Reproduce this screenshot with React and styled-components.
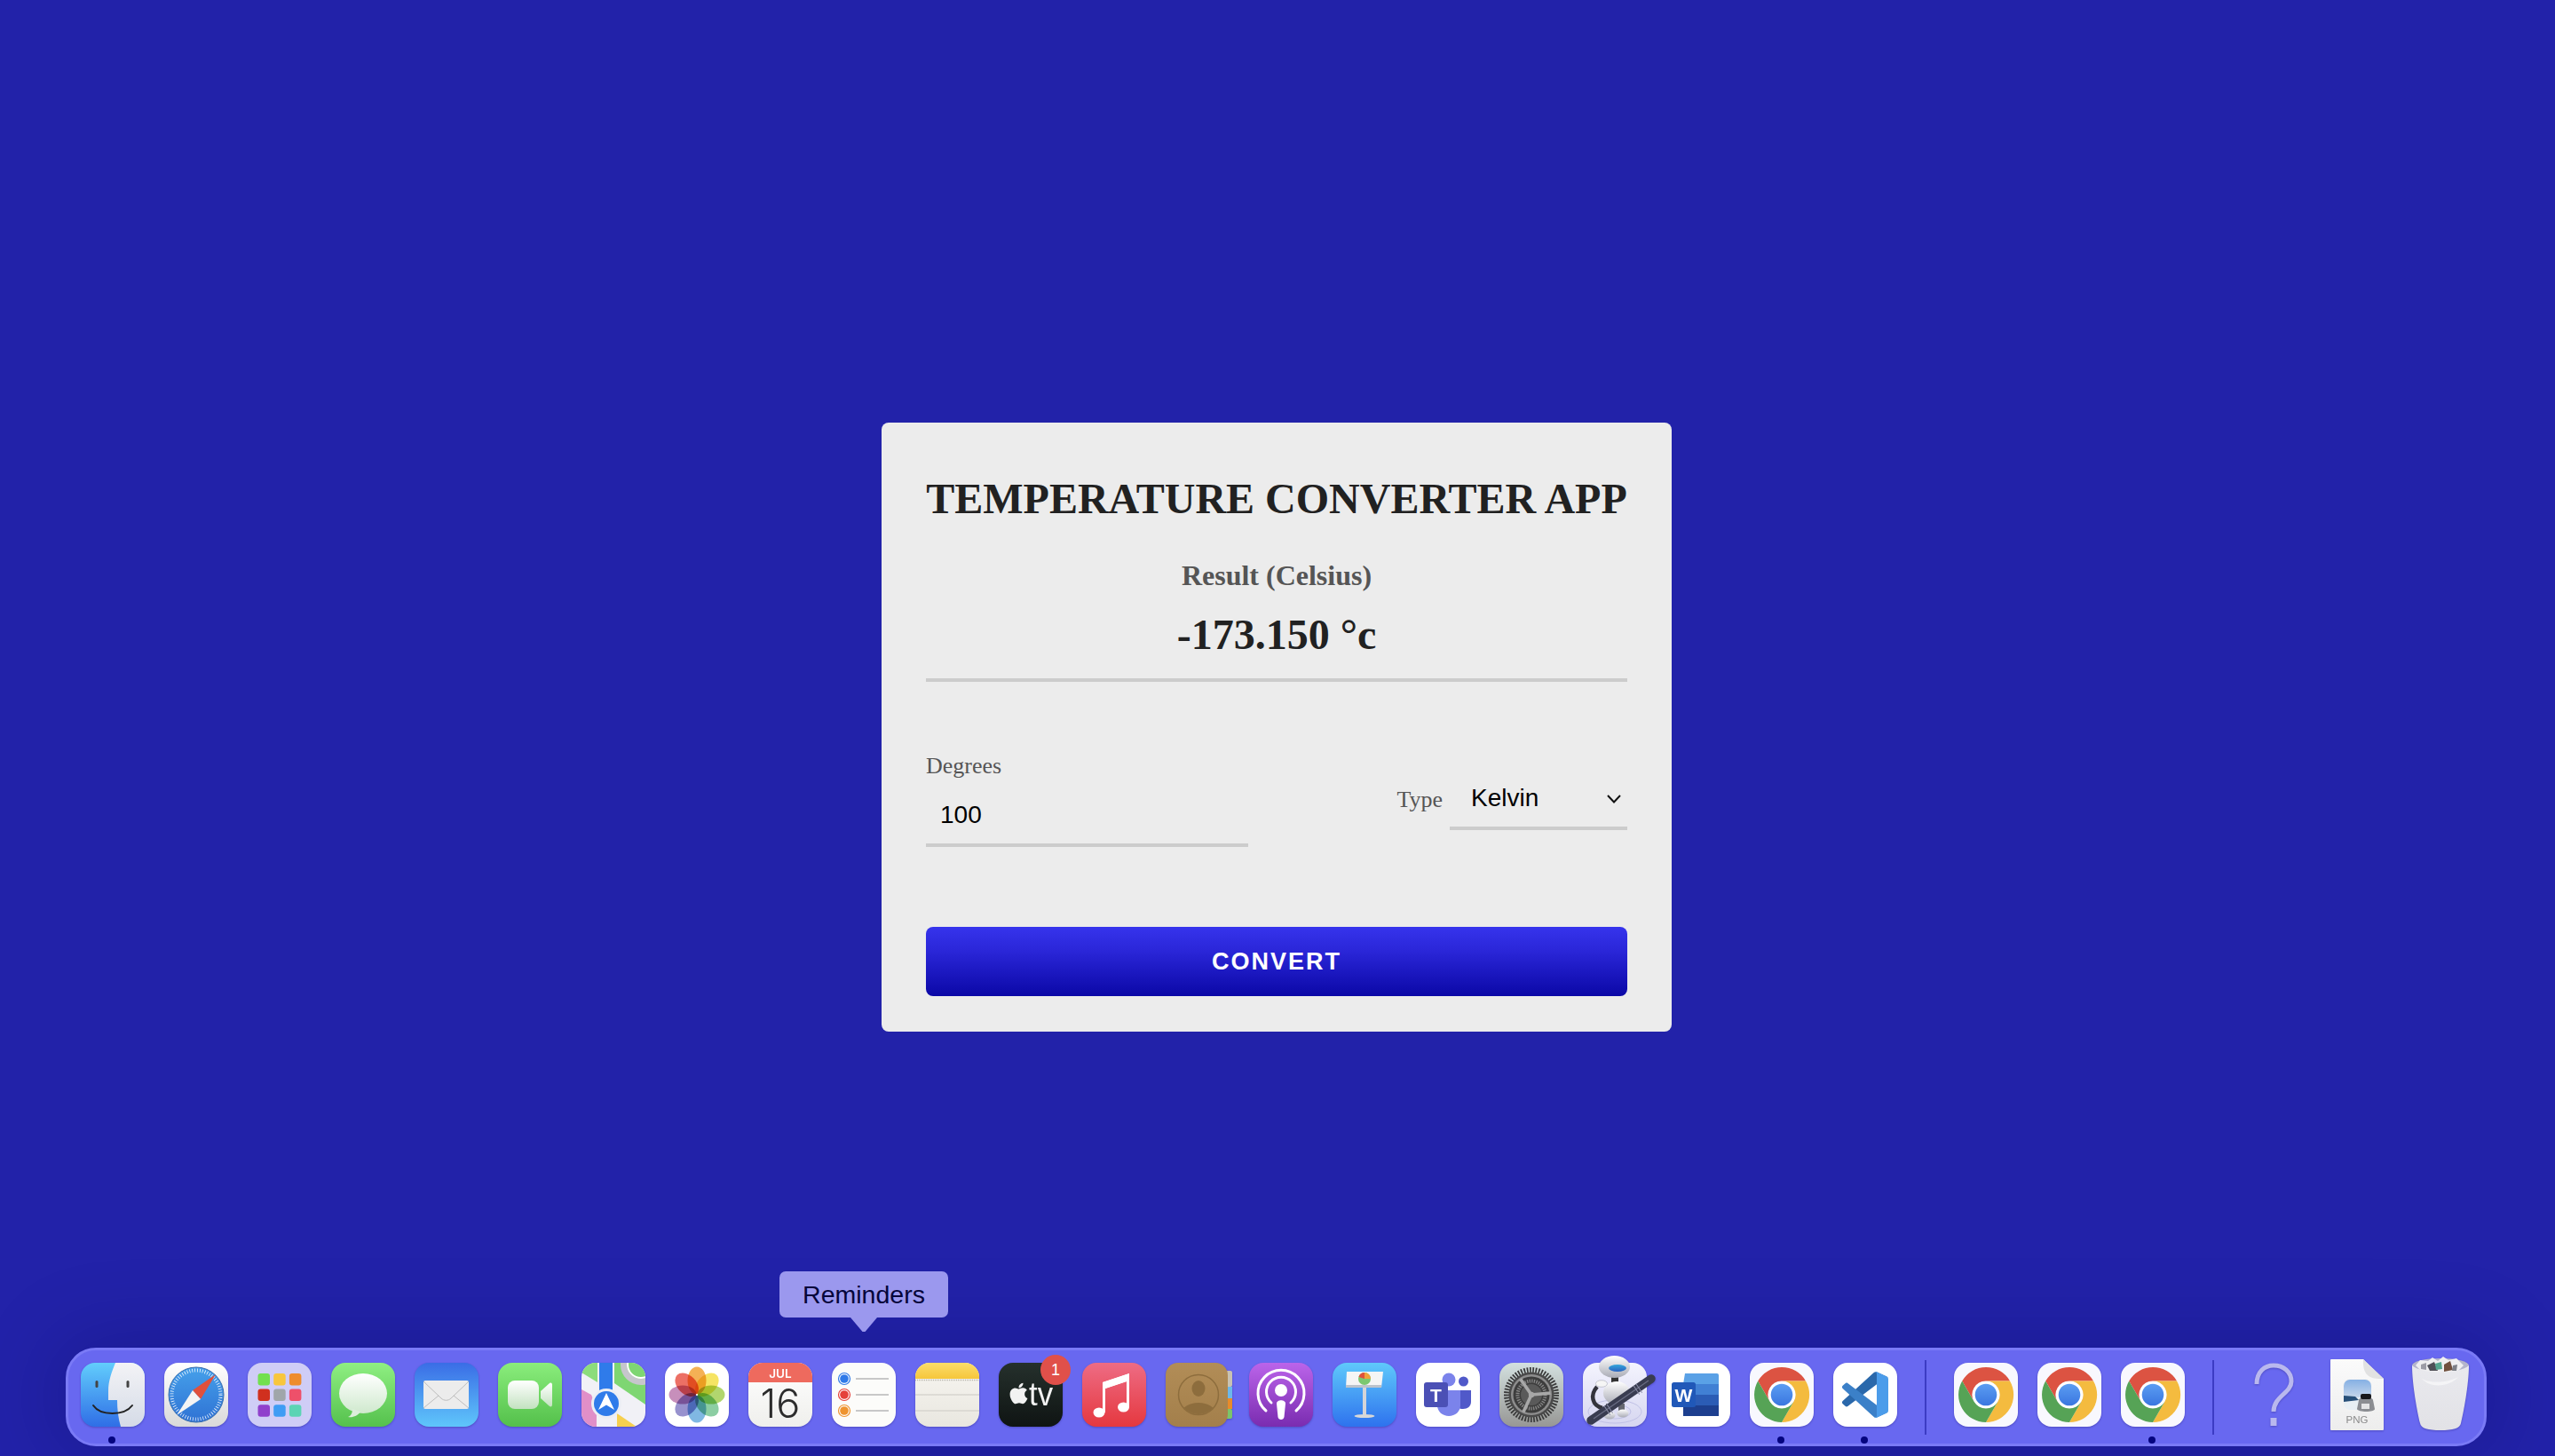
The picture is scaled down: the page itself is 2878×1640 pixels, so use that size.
import React from "react";
import styled, { createGlobalStyle } from "styled-components";
import { FaApple } from "react-icons/fa";

const Global = createGlobalStyle`
  html, body { margin: 0; padding: 0; background: #2222a9; }
  * { box-sizing: border-box; }
`;

const Screen = styled.div`
  position: relative;
  height: 1640px;
  overflow: hidden;
  background: #2222a9;
  display: flex;
  align-items: center;
  justify-content: center;
`;

const Card = styled.div`
  width: 890px;
  height: 686px;
  margin: 0 2px 2px 0;
  padding: 58px 50px 40px;
  background: #ececec;
  border-radius: 8px;
  font-family: "Liberation Serif", serif;
`;

const Title = styled.h1`
  margin: 0 0 41px;
  font-size: 48px;
  line-height: 55px;
  font-weight: 700;
  color: #212121;
  text-align: center;
  white-space: nowrap;
`;

const ResultLabel = styled.div`
  font-size: 32px;
  line-height: 37px;
  font-weight: 700;
  color: #555;
  text-align: center;
`;

const ResultValue = styled.div`
  margin-top: 20px;
  font-size: 48px;
  line-height: 55px;
  font-weight: 700;
  color: #212121;
  text-align: center;
`;

const Divider = styled.hr`
  margin: 22px 0 80px;
  height: 4px;
  border: 0;
  background: #ccc;
`;

const FormRow = styled.div`
  display: flex;
  align-items: center;
  justify-content: space-between;
  height: 106px;
`;

const Field = styled.label`
  display: flex;
  flex-direction: column;
  width: 363px;
`;

const LabelText = styled.span`
  font-size: 26px;
  line-height: 30px;
  color: #555;
`;

const DegreeInput = styled.input`
  margin-top: 4px;
  width: 100%;
  height: 72px;
  padding: 4px 16px 0;
  border: 0;
  border-bottom: 4px solid #ccc;
  background: transparent;
  font-family: "Liberation Sans", Arial, sans-serif;
  font-size: 28px;
  color: #000;
  outline: none;
`;

const TypeField = styled.label`
  display: flex;
  align-items: center;
  gap: 8px;
`;

const SelectWrap = styled.div`
  position: relative;
  width: 200px;
  height: 68px;
  border-bottom: 4px solid #ccc;
`;

const Select = styled.select`
  appearance: none;
  width: 100%;
  height: 100%;
  padding: 0 40px 2px 24px;
  border: 0;
  background: transparent;
  font-family: "Liberation Sans", Arial, sans-serif;
  font-size: 28px;
  color: #000;
  outline: none;
`;

const Chevron = styled.svg`
  position: absolute;
  right: 6px;
  top: 27px;
  width: 18px;
  height: 12px;
  pointer-events: none;
`;

const ConvertButton = styled.button`
  display: block;
  width: 100%;
  height: 78px;
  margin-top: 90px;
  border: 0;
  border-radius: 8px;
  background: linear-gradient(180deg, #3634ec 0%, #2a26d8 35%, #0b08a6 100%);
  color: #fff;
  font-family: "Liberation Sans", Arial, sans-serif;
  font-size: 27px;
  font-weight: 700;
  letter-spacing: 2px;
`;

const Dock = styled.div`
  position: absolute;
  left: 74px;
  bottom: 11px;
  width: 2727px;
  height: 111px;
  display: flex;
  align-items: flex-start;
  gap: 22px;
  padding: 14px 14px 0;
  background: #6868f0;
  border: 3px solid #7a7af6;
  border-radius: 34px;
  box-shadow: 0 0 90px 10px rgba(5, 0, 70, 0.22);
`;

const DockItem = styled.div`
  position: relative;
  flex: none;
  width: 72px;
  height: 72px;
`;

const Dot = styled.span`
  position: absolute;
  left: 31px;
  top: 83px;
  width: 8px;
  height: 8px;
  border-radius: 50%;
  background: #05057f;
`;

const Separator = styled.div`
  flex: none;
  width: 2px;
  height: 84px;
  margin: -3px 8.6px 0 ${(p) => p.$lead}px;
  background: #3c3cc4;
`;

const Badge = styled.span`
  position: absolute;
  left: 47px;
  top: -9px;
  width: 34px;
  height: 34px;
  border-radius: 50%;
  background: #e0504a;
  color: #fff;
  font-family: "Liberation Sans", Arial, sans-serif;
  font-size: 18px;
  line-height: 34px;
  text-align: center;
`;

const Tooltip = styled.div`
  position: absolute;
  left: 50%;
  bottom: calc(100% + 51px);
  transform: translateX(-50%);
  width: 190px;
  height: 52px;
  border-radius: 7px;
  background: #9b98ee;
  color: #05053a;
  font-family: "Liberation Sans", Arial, sans-serif;
  font-size: 28.5px;
  line-height: 52px;
  text-align: center;
  &::after {
    content: "";
    position: absolute;
    left: 80px;
    top: 100%;
    width: 30px;
    height: 16px;
    background: #9b98ee;
    clip-path: polygon(0 0, 100% 0, 55% 100%, 45% 100%);
  }
`;

const IconSvg = styled.svg`
  display: block;
  width: 72px;
  height: 72px;
  overflow: visible;
  filter: drop-shadow(0 1px 1px rgba(20, 10, 90, 0.3));
`;

const Icon = ({ children }) => <IconSvg viewBox="0 0 72 72">{children}</IconSvg>;

const Grad = ({ id, from, to, x2 = 0, y2 = 1 }) => (
  <linearGradient id={id} x1="0" y1="0" x2={x2} y2={y2}>
    <stop offset="0" stopColor={from} />
    <stop offset="1" stopColor={to} />
  </linearGradient>
);

const Tile = ({ fill }) => <rect width="72" height="72" rx="16" fill={fill} />;
const TileClip = ({ id }) => (
  <clipPath id={id}>
    <rect width="72" height="72" rx="16" />
  </clipPath>
);

const Finder = () => (
  <Icon>
    <defs>
      <Grad id="fa" from="#62cdfc" to="#2f6ee6" />
      <Grad id="fb" from="#f3f3f6" to="#d5dbe7" />
    </defs>
    <Tile fill="url(#fa)" />
    <path d="M39 0H56A16 16 0 0 1 72 16V56A16 16 0 0 1 56 72H45C42 62 41 52 41 42H31V32C31 20 35 10 39 0Z" fill="url(#fb)" />
    <rect x="16.5" y="20" width="3" height="8" rx="1.5" fill="#444" />
    <rect x="51.5" y="20" width="3" height="8" rx="1.5" fill="#444" />
    <path d="M14 48C22 60 49 60 58 48" fill="none" stroke="#222" strokeWidth="2" strokeLinecap="round" />
  </Icon>
);

const Safari = () => (
  <Icon>
    <defs>
      <Grad id="sa" from="#ffffff" to="#d9d9d9" />
      <Grad id="sb" from="#45a0ea" to="#2f72d4" />
    </defs>
    <Tile fill="url(#sa)" />
    <circle cx="36" cy="36" r="31" fill="url(#sb)" stroke="#3a6fae" strokeWidth="1" />
    <circle cx="36" cy="36" r="27.5" fill="none" stroke="#fff" strokeWidth="4" strokeDasharray="0.8 2.1" opacity="0.9" />
    <path d="M58 13L32 31L41 41Z" fill="#e0503c" />
    <path d="M14 59L32 31L41 41Z" fill="#f4f4f4" />
  </Icon>
);

const padColors = ["#72e04f", "#f8c63c", "#ee8c2c", "#d0301f", "#a0a6aa", "#ee506a", "#9040cc", "#3f9cf4", "#5cd4b4"];
const Launchpad = () => (
  <Icon>
    <Tile fill="#cfcdf6" />
    {padColors.map((c, i) => (
      <rect key={c} x={11.5 + (i % 3) * 17.7} y={12 + Math.floor(i / 3) * 17.6} width="13.5" height="13.5" rx="3" fill={c} />
    ))}
  </Icon>
);

const Messages = () => (
  <Icon>
    <defs>
      <Grad id="ma" from="#8fef82" to="#55c14d" />
      <Grad id="mb" from="#ffffff" to="#cfe9cd" />
    </defs>
    <Tile fill="url(#ma)" />
    <ellipse cx="36" cy="34.5" rx="27" ry="22.5" fill="url(#mb)" />
    <path d="M24 52C24 57 22 60 19 61C24 62 30 60 33 55Z" fill="#dceedb" />
  </Icon>
);

const Mail = () => (
  <Icon>
    <defs>
      <Grad id="la" from="#3a6de6" to="#5fc6fb" />
    </defs>
    <Tile fill="url(#la)" />
    <rect x="10" y="20" width="51" height="32" rx="2" fill="#ececec" />
    <path d="M10 21L30 40C33 43 38 43 41 40L61 21M10 51L27 37M61 51L44 37" fill="none" stroke="#bdbdbd" strokeWidth="1" />
  </Icon>
);

const FaceTime = () => (
  <Icon>
    <defs>
      <Grad id="ta" from="#8aed7c" to="#54c04b" />
      <Grad id="tb" from="#ffffff" to="#c3e2c0" />
    </defs>
    <Tile fill="url(#ta)" />
    <rect x="11" y="20" width="35" height="32" rx="8" fill="url(#tb)" />
    <path d="M48 32L58 23C60 22 61 23 61 25V47C61 49 60 50 58 49L48 40Z" fill="url(#tb)" />
  </Icon>
);

const Maps = () => (
  <Icon>
    <defs>
      <TileClip id="mapclip" />
    </defs>
    <g clipPath="url(#mapclip)">
      <rect width="72" height="72" fill="#f1f1f6" />
      <path d="M0 0H18V22L0 11Z" fill="#8cdc7c" />
      <path d="M37 0H72V47L37 23Z" fill="#7ed672" />
      <path d="M0 30L11 36L17 50V72H0Z" fill="#e08fc8" />
      <path d="M40 57L62 72H40Z" fill="#f6cf4e" />
      <rect x="20" y="0" width="15" height="32" fill="#2f7bea" />
      <circle cx="67" cy="2" r="19.5" fill="none" stroke="#c6c6cc" strokeWidth="7" />
      <circle cx="67" cy="2" r="15" fill="none" stroke="#fff" strokeWidth="2" />
      <circle cx="28" cy="46" r="17" fill="#eceef4" />
      <circle cx="28" cy="46" r="14" fill="#2f7bea" />
      <path d="M28 34L37 53L28 47.5L19 53Z" fill="#fff" />
    </g>
  </Icon>
);

const petals = ["#f3a63d", "#f5e14e", "#a6d15a", "#7cc796", "#6eaee0", "#8a83c8", "#c07fb2", "#ea5c50"];
const Photos = () => (
  <Icon>
    <Tile fill="#fff" />
    {petals.map((c, i) => (
      <ellipse key={c} cx="36" cy="20" rx="10.5" ry="15.5" fill={c} opacity="0.88" transform={`rotate(${i * 45} 36 36)`} style={{ mixBlendMode: "multiply" }} />
    ))}
    <circle cx="36" cy="36" r="1" fill="#fff" />
  </Icon>
);

const Calendar = () => (
  <Icon>
    <defs>
      <TileClip id="calclip" />
      <Grad id="ca" from="#ffffff" to="#efefec" />
    </defs>
    <Tile fill="url(#ca)" />
    <rect width="72" height="22" fill="#ee6a5e" clipPath="url(#calclip)" />
    <text x="36" y="17" textAnchor="middle" fontFamily="Inter, sans-serif" fontWeight="600" fontSize="13.5" fill="#fff">JUL</text>
    <text x="36" y="62" textAnchor="middle" fontFamily="Inter, sans-serif" fontWeight="300" fontSize="45" fill="#2c2c2c">16</text>
  </Icon>
);

const remColors = ["#2f7ae8", "#e5413a", "#ee9430"];
const Reminders = () => (
  <Icon>
    <Tile fill="#fcfcfa" />
    {remColors.map((c, i) => (
      <g key={c}>
        <circle cx="14" cy={18 + i * 18} r="6.5" fill="#fff" stroke={c} strokeWidth="1.2" />
        <circle cx="14" cy={18 + i * 18} r="4.8" fill={c} />
        <rect x="27" y={17 + i * 18} width="37" height="2" fill="#c8c8c8" />
      </g>
    ))}
  </Icon>
);

const Notes = () => (
  <Icon>
    <defs>
      <TileClip id="noteclip" />
      <Grad id="na" from="#f7f5f0" to="#e9e7e0" />
      <Grad id="nb" from="#fbdd6a" to="#f6c63b" />
    </defs>
    <Tile fill="url(#na)" />
    <rect width="72" height="18" fill="url(#nb)" clipPath="url(#noteclip)" />
    <line x1="0" x2="72" y1="19.5" y2="19.5" stroke="#b5b3ac" strokeWidth="1.5" strokeDasharray="1 1" />
    <line x1="0" x2="72" y1="36" y2="36" stroke="#d7d5cf" strokeWidth="1.5" />
    <line x1="0" x2="72" y1="54" y2="54" stroke="#d7d5cf" strokeWidth="1.5" />
  </Icon>
);

const TV = () => (
  <Icon>
    <defs>
      <Grad id="va" from="#25302c" to="#0f1413" />
    </defs>
    <Tile fill="url(#va)" />
    <FaApple x="9" y="21" size={27} color="#f2f2f2" />
    <text x="34" y="48" fontFamily="'Liberation Sans', sans-serif" fontSize="37" textLength="27" lengthAdjust="spacingAndGlyphs" fill="#f2f2f2">tv</text>
  </Icon>
);

const Music = () => (
  <Icon>
    <defs>
      <Grad id="ua" from="#ee6c84" to="#e5383f" />
    </defs>
    <Tile fill="url(#ua)" />
    <path d="M23 22L53 12V50H50V21L26 29V56H23Z" fill="#fff" />
    <path d="M23 22L53 12V20L23 30Z" fill="#fff" />
    <ellipse cx="19" cy="56" rx="6.5" ry="5.5" fill="#fff" />
    <ellipse cx="46.5" cy="50" rx="6.5" ry="5.5" fill="#fff" />
  </Icon>
);

const Contacts = () => (
  <Icon>
    <defs>
      <Grad id="oa" from="#b28d57" to="#a37f4b" />
      <clipPath id="oclip">
        <circle cx="37" cy="36" r="22" />
      </clipPath>
    </defs>
    <rect x="62" y="9" width="13" height="18" rx="2" fill="#c9c2b2" />
    <rect x="62" y="27" width="13" height="13" fill="#6cb8ea" />
    <rect x="62" y="40" width="13" height="12" fill="#e88b2a" />
    <rect x="62" y="52" width="13" height="11" rx="2" fill="#7cc46a" />
    <rect width="70" height="72" rx="14" fill="url(#oa)" />
    <circle cx="37" cy="36" r="22.5" fill="none" stroke="#8d6d3d" strokeWidth="1.5" />
    <ellipse cx="37" cy="29" rx="7.5" ry="9" fill="#8d6d3d" />
    <ellipse cx="37" cy="57" rx="19" ry="12" fill="#8d6d3d" clipPath="url(#oclip)" />
  </Icon>
);

const Podcasts = () => (
  <Icon>
    <defs>
      <Grad id="pa" from="#bb64ea" to="#7a2cb0" />
    </defs>
    <Tile fill="url(#pa)" />
    <path d="M19 54A26 26 0 1 1 53 54" fill="none" stroke="#fff" strokeWidth="3" strokeLinecap="round" />
    <path d="M25 45A16.5 16.5 0 1 1 47 45" fill="none" stroke="#fff" strokeWidth="3" strokeLinecap="round" />
    <circle cx="36" cy="31" r="7" fill="#fff" />
    <path d="M31 46C31 41 41 41 41 46L39.5 61C39 65 33 65 32.5 61Z" fill="#fff" />
  </Icon>
);

const Keynote = () => (
  <Icon>
    <defs>
      <Grad id="ka" from="#5fc9fb" to="#2e72ee" />
    </defs>
    <Tile fill="url(#ka)" />
    <rect x="34" y="28" width="4" height="31" fill="#d5d5d8" />
    <ellipse cx="36" cy="60" rx="11.5" ry="2" fill="#d8d8d8" />
    <path d="M16 10H57L55 28H15Z" fill="#f5f5f5" />
    <rect x="15" y="25" width="40" height="3" fill="#bcc3cc" />
    <circle cx="36" cy="18" r="7" fill="#7bc870" />
    <path d="M36 18V11A7 7 0 0 1 43 18Z" fill="#f0a23c" />
    <path d="M36 18V11A7 7 0 0 0 29.5 16Z" fill="#e0503c" />
  </Icon>
);

const Teams = () => (
  <Icon>
    <Tile fill="#fff" />
    <circle cx="37" cy="19" r="7.5" fill="#7b83eb" />
    <circle cx="53.5" cy="21" r="5.5" fill="#5059c9" />
    <path d="M44 31H62V44C62 49 58 52 53 52C49 52 45 50 44 46Z" fill="#5059c9" />
    <path d="M24 31H50V48C50 55 44 60 37 60C30 60 24 55 24 48Z" fill="#7b83eb" />
    <rect x="9" y="22" width="27" height="28" rx="3" fill="#4b50b5" />
    <text x="22.5" y="44" textAnchor="middle" fontFamily="'Liberation Sans', sans-serif" fontWeight="700" fontSize="21" fill="#fff">T</text>
  </Icon>
);

const spokes = [-125, -5, 115];
const SystemPrefs = () => (
  <Icon>
    <defs>
      <Grad id="ya" from="#d3e0df" to="#979795" />
    </defs>
    <Tile fill="url(#ya)" />
    <circle cx="36" cy="36" r="27" fill="none" stroke="#3a3a3a" strokeWidth="8" strokeDasharray="1.7 1.5" />
    <circle cx="36" cy="36" r="25.5" fill="#4a4a4a" />
    <circle cx="36" cy="36" r="23" fill="#8d8d8d" />
    <circle cx="36" cy="36" r="20.5" fill="#3d3d3d" />
    <circle cx="36" cy="36" r="15.5" fill="none" stroke="#888" strokeWidth="4" strokeDasharray="1.3 1.3" />
    <circle cx="36" cy="36" r="12" fill="#5a5a5a" />
    {spokes.map((a) => (
      <rect key={a} x="36" y="34.2" width="21.5" height="3.6" fill="#a8a8a8" transform={`rotate(${a} 36 36)`} />
    ))}
    <circle cx="36" cy="36" r="3.2" fill="#a8a8a8" />
  </Icon>
);

const Automator = () => (
  <Icon>
    <defs>
      <Grad id="aa" from="#f4f4fe" to="#d6d6f0" />
      <Grad id="ab" from="#ffffff" to="#a9abb5" />
      <Grad id="ac" from="#35a7dc" to="#2a62c0" />
    </defs>
    <Tile fill="url(#aa)" />
    <ellipse cx="36" cy="55" rx="30" ry="13" fill="none" stroke="#c0c1e6" strokeWidth="1" />
    <ellipse cx="36" cy="55" rx="18" ry="8" fill="none" stroke="#c0c1e6" strokeWidth="1" />
    <path d="M16 27C8 36 10 48 22 51" fill="none" stroke="#34343c" strokeWidth="4.5" />
    <rect x="32" y="15" width="8" height="8" fill="#333" />
    <ellipse cx="38" cy="34" rx="15" ry="13" fill="url(#ab)" />
    <ellipse cx="21" cy="23.5" rx="6.5" ry="3.8" fill="#f5f5f5" stroke="#9a9ca8" strokeWidth="0.5" />
    <rect x="26" y="46" width="7" height="12" fill="#65676f" />
    <rect x="40" y="46" width="7" height="11" fill="#65676f" />
    <ellipse cx="30" cy="59" rx="6.5" ry="4.5" fill="url(#ab)" />
    <ellipse cx="45" cy="57" rx="6.5" ry="4.5" fill="url(#ab)" />
    <ellipse cx="35.5" cy="4.5" rx="17.5" ry="12.5" fill="url(#ab)" />
    <ellipse cx="39" cy="6" rx="10" ry="4" fill="url(#ac)" />
    <path d="M9 65L77 18" stroke="#393c50" strokeWidth="9.5" strokeLinecap="round" />
    <path d="M12 63L74 20" stroke="#6b6e85" strokeWidth="1.2" />
    <path d="M27 54L31 51.3M60 31L64 28.3" stroke="#8c8ea8" strokeWidth="12" strokeDasharray="1 2.5" />
  </Icon>
);

const wordBands = ["#5aa1e6", "#4180d4", "#2b5cb5", "#1d3f8f"];
const Word = () => (
  <Icon>
    <Tile fill="#fff" />
    {wordBands.map((c, i) => (
      <path key={c} d={`M${i === 0 ? "21 12H57Q59 12 59 14" : `19 ${12 + i * 12}H59`}V${24 + i * 12}H19Z`} fill={c} />
    ))}
    <rect x="6" y="22" width="27" height="28" rx="2.5" fill="#2058b8" />
    <text x="19.5" y="44" textAnchor="middle" fontFamily="'Liberation Sans', sans-serif" fontWeight="700" fontSize="21" fill="#fff">W</text>
  </Icon>
);

const Chrome = ({ id }) => (
  <Icon>
    <defs>
      <Grad id={id} from="#5b9df2" to="#3a76e0" />
    </defs>
    <Tile fill="#f8f8fe" />
    <path d="M36 5A31 31 0 0 1 63 20.5L36 20.5A15.5 15.5 0 0 0 22.6 43.8L9.2 20.5A31 31 0 0 1 36 5Z" fill="#dc5342" />
    <path d="M63 20.5A31 31 0 0 1 36 67L49.4 43.8A15.5 15.5 0 0 0 36 20.5Z" fill="#f4bb3f" />
    <path d="M9.2 20.5L22.6 43.8A15.5 15.5 0 0 0 49.4 43.8L36 67A31 31 0 0 1 9.2 20.5Z" fill="#56a356" />
    <circle cx="36" cy="36" r="15" fill="#fff" />
    <circle cx="36" cy="36" r="12.3" fill={`url(#${id})`} />
  </Icon>
);

const VSCode = () => (
  <Icon>
    <Tile fill="#fff" />
    <g transform="translate(10 10) scale(0.52)">
      <path fill="#2a68ab" d="M96.4614 10.7962L75.8569 0.875542C73.4719 -0.272773 70.6217 0.211611 68.75 2.08333L1.29858 63.5832C-0.515693 65.2373 -0.513607 68.0937 1.30308 69.7452L6.81272 74.754C8.29793 76.1042 10.5347 76.2036 12.1338 74.9905L93.3609 13.3699C96.086 11.3026 100 13.2462 100 16.6667V16.4275C100 14.0265 98.6246 11.8378 96.4614 10.7962Z" />
      <path fill="#3b80c8" d="M96.4614 89.2038L75.8569 99.1245C73.4719 100.273 70.6217 99.7884 68.75 97.9167L1.29858 36.4168C-0.515693 34.7627 -0.513607 31.9063 1.30308 30.2548L6.81272 25.246C8.29793 23.8958 10.5347 23.7964 12.1338 25.0095L93.3609 86.6301C96.086 88.6974 100 86.7538 100 83.3333V83.5725C100 85.9735 98.6246 88.1622 96.4614 89.2038Z" />
      <path fill="#4b9cea" d="M75.8578 99.1263C73.4721 100.274 70.6219 99.7885 68.75 97.9166C71.0564 100.223 75 98.5895 75 95.3278V4.67213C75 1.41039 71.0564 -0.223106 68.75 2.08329C70.6219 0.211402 73.4721 -0.273666 75.8578 0.873633L96.4587 10.7807C98.6234 11.8217 100 14.0112 100 16.4132V83.5871C100 85.9891 98.6234 88.1786 96.4586 89.2196L75.8578 99.1263Z" />
    </g>
  </Icon>
);

const Question = () => (
  <Icon>
    <path d="M17 24C17 10 26 3 36 3C47 3 56 10 56 21C56 34 36 38 36 55" fill="none" stroke="#b9b8ee" strokeWidth="5" />
    <rect x="32.5" y="62" width="7" height="9" fill="#b9b8ee" />
  </Icon>
);

const PngFile = () => (
  <Icon>
    <defs>
      <clipPath id="pclip">
        <rect x="21" y="19" width="31" height="34" rx="7" />
      </clipPath>
      <Grad id="pb" from="#85b0e4" to="#c6d6ea" />
      <Grad id="pc" from="#fbfbfb" to="#ededed" />
    </defs>
    <path d="M7 -4H43L66 18V75A1 1 0 0 1 65 76H7A1 1 0 0 1 6 75V-3A1 1 0 0 1 7 -4Z" fill="url(#pc)" />
    <path d="M43 -4L66 18C50 19 42 14 43 -4Z" fill="#e2e2e2" />
    <rect x="20" y="18" width="33" height="36" rx="8" fill="#f3f3f3" />
    <g clipPath="url(#pclip)">
      <rect x="21" y="19" width="31" height="20" fill="url(#pb)" />
      <rect x="21" y="39" width="31" height="14" fill="#e8eff4" />
      <path d="M21 37L34 38L38 42L21 44Z" fill="#274f78" />
    </g>
    <path d="M38 42C38 38 54 38 54 42L56 52C56 56 37 56 36 52Z" fill="#8b8d92" />
    <rect x="40" y="35" width="12" height="6" rx="2" fill="#17171a" />
    <rect x="41" y="46" width="9" height="6" fill="#e4e4e6" />
    <text x="36" y="68" textAnchor="middle" fontFamily="'Liberation Sans', sans-serif" fontSize="11.5" fill="#8c8c8c">PNG</text>
  </Icon>
);

const Trash = () => (
  <Icon>
    <defs>
      <Grad id="ra" from="#e9e9ee" to="#e2e2e6" />
    </defs>
    <ellipse cx="36" cy="3" rx="32" ry="8" fill="#b5b5cb" />
    <path d="M8 3L13 -3L22 -2L27 -6L33 -2L39 -7L45 -3L54 -5L62 3L54 11H16Z" fill="#efeff1" />
    <path d="M21 3L29 -1L33 9L24 9Z" fill="#505058" />
    <path d="M30 1L37 -1L38 7L31 8Z" fill="#55a690" />
    <path d="M40 2L47 -2L50 8L40 10Z" fill="#70503e" />
    <path d="M50 3L55 2L54 9L49 9Z" fill="#7d8088" />
    <path d="M14 2L20 0L20 8L14 7Z" fill="#9d9da6" />
    <path d="M4 3C14 13 58 13 68 3C68 24 62 56 59 68C58 74 50 76 36 76C22 76 14 74 13 68C10 56 4 24 4 3Z" fill="url(#ra)" />
    <path d="M15 18C26 24 46 22 56 16C48 26 26 30 15 18Z" fill="#f4f4f6" />
  </Icon>
);

const firstGroup = [
  { key: "finder", Art: Finder, dot: true },
  { key: "safari", Art: Safari },
  { key: "launchpad", Art: Launchpad },
  { key: "messages", Art: Messages },
  { key: "mail", Art: Mail },
  { key: "facetime", Art: FaceTime },
  { key: "maps", Art: Maps },
  { key: "photos", Art: Photos },
  { key: "calendar", Art: Calendar },
  { key: "reminders", Art: Reminders, tip: "Reminders" },
  { key: "notes", Art: Notes },
  { key: "tv", Art: TV, badge: "1" },
  { key: "music", Art: Music },
  { key: "contacts", Art: Contacts },
  { key: "podcasts", Art: Podcasts },
  { key: "keynote", Art: Keynote },
  { key: "teams", Art: Teams },
  { key: "prefs", Art: SystemPrefs },
  { key: "automator", Art: Automator },
  { key: "word", Art: Word },
  { key: "chrome0", Art: () => <Chrome id="c0" />, dot: true },
  { key: "vscode", Art: VSCode, dot: true },
];
const secondGroup = [
  { key: "chrome1", Art: () => <Chrome id="c1" /> },
  { key: "chrome2", Art: () => <Chrome id="c2" /> },
  { key: "chrome3", Art: () => <Chrome id="c3" />, dot: true },
];
const thirdGroup = [
  { key: "question", Art: Question },
  { key: "png", Art: PngFile },
  { key: "trash", Art: Trash },
];

const renderItems = (items) =>
  items.map(({ key, Art, dot, badge, tip }) => (
    <DockItem key={key}>
      <Art />
      {dot && <Dot />}
      {badge && <Badge>{badge}</Badge>}
      {tip && <Tooltip>{tip}</Tooltip>}
    </DockItem>
  ));

export default function App() {
  return (
    <Screen>
      <Global />
      <Card>
        <Title>TEMPERATURE CONVERTER APP</Title>
        <ResultLabel>Result (Celsius)</ResultLabel>
        <ResultValue>-173.150 °c</ResultValue>
        <Divider />
        <FormRow>
          <Field>
            <LabelText>Degrees</LabelText>
            <DegreeInput defaultValue="100" />
          </Field>
          <TypeField>
            <LabelText>Type</LabelText>
            <SelectWrap>
              <Select defaultValue="Kelvin">
                <option>Celsius</option>
                <option>Fahrenheit</option>
                <option>Kelvin</option>
              </Select>
              <Chevron viewBox="0 0 18 12">
                <path d="M2 2L9 9.5L16 2" fill="none" stroke="#111" strokeWidth="2" />
              </Chevron>
            </SelectWrap>
          </TypeField>
        </FormRow>
        <ConvertButton>CONVERT</ConvertButton>
      </Card>
      <Dock>
        {renderItems(firstGroup)}
        <Separator $lead={9.4} />
        {renderItems(secondGroup)}
        <Separator $lead={9} />
        {renderItems(thirdGroup)}
      </Dock>
    </Screen>
  );
}
